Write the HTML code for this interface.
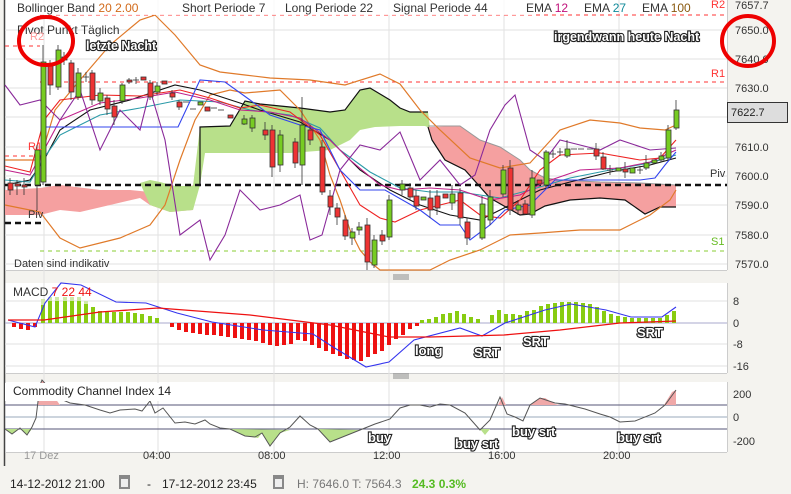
<!DOCTYPE html>
<html><head><meta charset="utf-8"><style>
html,body{margin:0;padding:0;background:#f4f3ef;}
svg{display:block;font-family:"Liberation Sans",sans-serif;}
.ol{font-family:"Liberation Sans",sans-serif;font-weight:bold;fill:#fff;stroke:#222;stroke-width:2.2px;paint-order:stroke;}
</style></head><body>
<svg width="791" height="494" viewBox="0 0 791 494" xmlns="http://www.w3.org/2000/svg">
<rect x="0" y="0" width="791" height="494" fill="#f4f3ef"/>
<rect x="5" y="0" width="722" height="270" fill="#fff"/>
<rect x="5" y="283" width="722" height="90" fill="#fff"/>
<rect x="5" y="382" width="722" height="70" fill="#fff"/>
<line x1="4.5" y1="0" x2="4.5" y2="466" stroke="#444" stroke-width="1.5"/>
<line x1="727.5" y1="0" x2="727.5" y2="270" stroke="#ccc"/>
<line x1="727.5" y1="283" x2="727.5" y2="373" stroke="#ccc"/>
<line x1="727.5" y1="382" x2="727.5" y2="452" stroke="#ccc"/>
<line x1="5" y1="270.5" x2="727" y2="270.5" stroke="#ccc"/>
<line x1="5" y1="373.5" x2="727" y2="373.5" stroke="#ccc"/>
<line x1="5" y1="452.5" x2="727" y2="452.5" stroke="#ccc"/>
<g stroke="#888"><line x1="393" y1="275" x2="409" y2="275"/><line x1="393" y1="277" x2="409" y2="277"/><line x1="393" y1="279" x2="409" y2="279"/>
<line x1="393" y1="374" x2="409" y2="374"/><line x1="393" y1="376" x2="409" y2="376"/><line x1="393" y1="378" x2="409" y2="378"/></g>
<g stroke="#e2e2e2">
<line x1="44" y1="0" x2="44" y2="452"/><line x1="158" y1="0" x2="158" y2="452"/><line x1="274" y1="0" x2="274" y2="452"/><line x1="389" y1="0" x2="389" y2="452"/><line x1="504" y1="0" x2="504" y2="452"/><line x1="619" y1="0" x2="619" y2="452"/>
<line x1="5" y1="30" x2="727" y2="30"/><line x1="5" y1="59" x2="727" y2="59"/><line x1="5" y1="88" x2="727" y2="88"/><line x1="5" y1="117" x2="727" y2="117"/><line x1="5" y1="147" x2="727" y2="147"/><line x1="5" y1="176" x2="727" y2="176"/><line x1="5" y1="205" x2="727" y2="205"/><line x1="5" y1="235" x2="727" y2="235"/><line x1="5" y1="264" x2="727" y2="264"/>
<line x1="5" y1="301" x2="727" y2="301"/><line x1="5" y1="344" x2="727" y2="344"/><line x1="5" y1="366" x2="727" y2="366"/>
</g>
<polygon points="5,190 40,188 60,185 100,190 130,190 150,192 160,185 175,186 190,186 195,185 193,210 170,212 150,205 140,198 110,205 80,212 60,210 40,215 5,215" fill="#f5a0a0"/>
<polygon points="140,183 150,180 160,182 175,186 193,186 200,127 230,126 245,101 260,104 300,108 330,112 345,110 360,90 370,88 390,100 400,108 410,112 428,112 430,128 425,126 400,126 375,127 360,130 350,140 330,150 290,153 230,153 205,153 200,185 193,210 170,212 150,205" fill="#b8e08a"/>
<polyline points="200,185 200,127 230,126 245,101 260,104 300,108 330,112 345,110 360,90 370,88 390,100 400,108 410,112 428,112" fill="none" stroke="#111" stroke-width="1.2"/>
<polygon points="428,127 460,126 480,140 500,147 520,160 530,170 545,178 560,180 600,182 640,183 676,185 676,207 660,207 645,214 625,200 600,198 570,200 545,206 530,214 520,215 490,198 465,170 445,160 432,140" fill="#f5a0a0"/>
<polyline points="428,127 432,140 445,160 465,170 490,198 520,215 530,214 545,206 570,200 600,198 625,200 645,214 660,207 676,207" fill="none" stroke="#111" stroke-width="1.2"/>
<polyline points="428,126 460,126 480,140 500,147 520,160 530,170 545,178 560,180 600,182 640,183 676,185" fill="none" stroke="#999" stroke-width="1"/>
<line x1="5" y1="185" x2="727" y2="185" stroke="#111" stroke-width="2.5" stroke-dasharray="6,4"/>
<line x1="5" y1="223" x2="42" y2="223" stroke="#111" stroke-width="2.5" stroke-dasharray="6,4"/>
<line x1="40" y1="82" x2="727" y2="82" stroke="#f33" stroke-dasharray="4,4"/>
<line x1="40" y1="15" x2="727" y2="15" stroke="#f33" stroke-dasharray="4,4"/>
<line x1="5" y1="46" x2="40" y2="46" stroke="#f33" stroke-dasharray="4,4"/>
<line x1="5" y1="156" x2="40" y2="156" stroke="#f33" stroke-dasharray="4,4"/>
<line x1="40" y1="251" x2="727" y2="251" stroke="#8c3" stroke-dasharray="4,4"/>
<polyline points="5,160 40,160 55,110 80,80 110,45 140,20 155,15 175,35 200,65 220,72 245,75 270,78 310,80 345,85 380,74 400,84 420,110 440,130 470,158 500,168 530,163 560,130 590,120 620,123 640,128 665,130 676,125" fill="none" stroke="#e07a2a" stroke-width="1.2"/>
<polyline points="5,205 40,212 60,238 80,248 120,238 150,225 165,205 180,160 195,120 210,95 230,90 245,93 280,90 300,110 320,140 330,175 340,200 350,230 360,250 370,262 380,270 430,270 450,260 480,250 510,235 540,233 580,230 620,230 650,215 670,200 676,190" fill="none" stroke="#e07a2a" stroke-width="1.2"/>
<polyline points="5,185 30,180 44,160 60,130 90,110 130,100 175,85 200,90 240,103 260,110 300,122 330,140 360,170 390,190 420,205 450,215 480,220 500,210 520,200 540,190 570,182 610,172 650,165 676,158" fill="none" stroke="#111" stroke-width="1.1"/>
<polyline points="5,180 30,182 44,158 60,135 100,115 140,108 180,100 220,102 250,110 290,115 320,128 340,150 370,172 400,188 430,192 460,192 500,198 530,190 570,178 610,170 650,163 676,155" fill="none" stroke="#2a9aa8" stroke-width="1.1"/>
<polyline points="5,170 30,175 44,150 60,120 100,103 140,98 175,92 210,100 240,110 270,112 300,118 330,140 350,160 380,185 400,190 430,188 460,190 490,200 520,195 545,182 580,170 620,168 650,162 676,150" fill="none" stroke="#c0208a" stroke-width="1.1"/>
<polyline points="5,166 30,172 44,120 60,100 100,95 140,96 180,90 210,98 240,108 260,105 290,112 320,135 340,170 360,205 380,218 395,222 420,210 440,205 460,200 480,215 500,218 520,200 540,170 560,155 600,153 640,160 660,158 676,140" fill="none" stroke="#ee2222" stroke-width="1.1"/>
<polyline points="44,127 178,127 200,80 225,82 250,100 270,115 300,125 320,130 340,170 360,190 385,190 420,210 440,225 460,225 470,240 490,225 505,210 530,205 555,180 600,180 640,180 655,178 665,165 676,152" fill="none" stroke="#3344ee" stroke-width="1.1"/>
<polyline points="5,85 20,105 40,100 60,120 80,90 100,150 120,110 140,130 150,90 165,140 180,235 200,220 210,260 225,235 240,190 260,210 280,205 300,195 310,240 322,235 340,170 360,145 380,150 400,132 420,180 440,160 460,185 475,175 490,130 505,105 515,95 530,150 545,160 560,140 580,145 600,150 620,140 650,150 676,148" fill="none" stroke="#8a2a9a" stroke-width="1.1"/>
<g stroke="#333" stroke-width="0.8">
<line x1="10" y1="178" x2="10" y2="195"/><rect x="8" y="183" width="5" height="7" fill="#e33"/>
<line x1="17" y1="180" x2="17" y2="195"/><rect x="15" y="184" width="5" height="2" fill="#e33"/>
<line x1="24" y1="178" x2="24" y2="195"/><rect x="22" y="185" width="5" height="2" fill="#e33"/>
<line x1="37" y1="145" x2="37" y2="210"/><rect x="35" y="150" width="5" height="35" fill="#7c2"/>
<line x1="43" y1="45" x2="43" y2="185"/><rect x="41" y="62" width="5" height="120" fill="#7c2"/>
<line x1="50" y1="60" x2="50" y2="95"/><rect x="48" y="65" width="5" height="20" fill="#e33"/>
<line x1="58" y1="45" x2="58" y2="90"/><rect x="56" y="50" width="5" height="37" fill="#7c2"/>
<line x1="64" y1="52" x2="64" y2="65"/><rect x="62" y="57" width="5" height="3" fill="#e33"/>
<line x1="71" y1="60" x2="71" y2="100"/><rect x="69" y="63" width="5" height="29" fill="#e33"/>
<line x1="78" y1="68" x2="78" y2="100"/><rect x="76" y="73" width="5" height="24" fill="#7c2"/>
<line x1="86" y1="72" x2="86" y2="82"/><line x1="83" y1="77" x2="89" y2="77"/>
<line x1="92" y1="70" x2="92" y2="105"/><rect x="90" y="73" width="5" height="27" fill="#e33"/>
<line x1="100" y1="88" x2="100" y2="105"/><rect x="98" y="93" width="5" height="8" fill="#7c2"/>
<line x1="107" y1="95" x2="107" y2="115"/><rect x="105" y="98" width="5" height="11" fill="#e33"/>
<line x1="114" y1="100" x2="114" y2="125"/><rect x="112" y="106" width="5" height="11" fill="#e33"/>
<line x1="122" y1="83" x2="122" y2="104"/><rect x="120" y="85" width="5" height="16" fill="#7c2"/>
<line x1="129" y1="78" x2="129" y2="84"/><rect x="127" y="80" width="5" height="2" fill="#e33"/>
<line x1="136" y1="77" x2="136" y2="84"/><line x1="133" y1="80" x2="139" y2="80"/>
<rect x="141" y="77" width="5" height="3" fill="#e33"/>
<line x1="150" y1="80" x2="150" y2="100"/><rect x="148" y="83" width="5" height="14" fill="#e33"/>
<line x1="157" y1="82" x2="157" y2="95"/><rect x="155" y="86" width="5" height="6" fill="#7c2"/>
<rect x="162" y="81" width="5" height="3" fill="#e33"/>
<line x1="172" y1="90" x2="172" y2="100"/><rect x="170" y="93" width="5" height="4" fill="#e33"/>
<line x1="179" y1="100" x2="179" y2="110"/><rect x="177" y="102" width="5" height="5" fill="#e33"/>
<line x1="183" y1="102" x2="189" y2="102"/><line x1="190" y1="109" x2="196" y2="109"/>
<rect x="198" y="102" width="5" height="3" fill="#7c2"/>
<rect x="205" y="107" width="5" height="4" fill="#e33"/>
<line x1="211" y1="108" x2="217" y2="108"/><line x1="218" y1="110" x2="224" y2="110"/>
<rect x="228" y="115" width="5" height="3" fill="#e33"/>
<line x1="244" y1="115" x2="244" y2="125"/><rect x="242" y="119" width="5" height="5" fill="#7c2"/>
<line x1="252" y1="115" x2="252" y2="132"/><rect x="250" y="118" width="5" height="10" fill="#7c2"/>
<line x1="265" y1="122" x2="265" y2="140"/><rect x="263" y="130" width="5" height="5" fill="#e33"/>
<line x1="272" y1="125" x2="272" y2="177"/><rect x="270" y="130" width="5" height="37" fill="#e33"/>
<line x1="280" y1="130" x2="280" y2="172"/><rect x="278" y="135" width="5" height="30" fill="#7c2"/>
<line x1="295" y1="138" x2="295" y2="168"/><rect x="293" y="142" width="5" height="21" fill="#e33"/>
<line x1="302" y1="97" x2="302" y2="185"/><rect x="300" y="125" width="5" height="40" fill="#7c2"/>
<line x1="310" y1="125" x2="310" y2="145"/><rect x="308" y="130" width="5" height="10" fill="#e33"/>
<line x1="322" y1="140" x2="322" y2="195"/><rect x="320" y="147" width="5" height="45" fill="#e33"/>
<line x1="330" y1="190" x2="330" y2="215"/><rect x="328" y="196" width="5" height="11" fill="#e33"/>
<line x1="337" y1="203" x2="337" y2="225"/><rect x="335" y="208" width="5" height="9" fill="#e33"/>
<line x1="345" y1="215" x2="345" y2="240"/><rect x="343" y="220" width="5" height="16" fill="#e33"/>
<line x1="352" y1="228" x2="352" y2="245"/><rect x="350" y="232" width="5" height="6" fill="#7c2"/>
<line x1="359" y1="222" x2="359" y2="235"/><rect x="357" y="227" width="5" height="3" fill="#7c2"/>
<line x1="367" y1="218" x2="367" y2="270"/><rect x="365" y="225" width="5" height="37" fill="#e33"/>
<line x1="374" y1="235" x2="374" y2="268"/><rect x="372" y="240" width="5" height="25" fill="#7c2"/>
<line x1="382" y1="230" x2="382" y2="245"/><rect x="380" y="235" width="5" height="6" fill="#e33"/>
<line x1="389" y1="195" x2="389" y2="240"/><rect x="387" y="200" width="5" height="37" fill="#7c2"/>
<line x1="402" y1="180" x2="402" y2="195"/><rect x="400" y="184" width="5" height="6" fill="#7c2"/>
<line x1="410" y1="183" x2="410" y2="200"/><rect x="408" y="188" width="5" height="9" fill="#e33"/>
<line x1="416" y1="190" x2="416" y2="210"/><rect x="414" y="196" width="5" height="10" fill="#e33"/>
<rect x="421" y="197" width="5" height="3" fill="#7c2"/>
<line x1="430" y1="190" x2="430" y2="218"/><rect x="428" y="198" width="5" height="12" fill="#e33"/>
<line x1="437" y1="190" x2="437" y2="215"/><rect x="435" y="196" width="5" height="12" fill="#e33"/>
<rect x="443" y="194" width="5" height="4" fill="#e33"/>
<line x1="452" y1="185" x2="452" y2="210"/><rect x="450" y="194" width="5" height="9" fill="#7c2"/>
<line x1="460" y1="188" x2="460" y2="225"/><rect x="458" y="193" width="5" height="25" fill="#e33"/>
<line x1="467" y1="218" x2="467" y2="245"/><rect x="465" y="222" width="5" height="16" fill="#e33"/>
<line x1="482" y1="196" x2="482" y2="240"/><rect x="480" y="204" width="5" height="34" fill="#7c2"/>
<line x1="490" y1="190" x2="490" y2="225"/><rect x="488" y="197" width="5" height="23" fill="#7c2"/>
<line x1="503" y1="165" x2="503" y2="197"/><rect x="501" y="170" width="5" height="24" fill="#7c2"/>
<line x1="510" y1="160" x2="510" y2="215"/><rect x="508" y="168" width="5" height="42" fill="#e33"/>
<line x1="518" y1="200" x2="518" y2="215"/><rect x="516" y="205" width="5" height="5" fill="#7c2"/>
<line x1="525" y1="200" x2="525" y2="215"/><rect x="523" y="204" width="5" height="10" fill="#e33"/>
<line x1="532" y1="170" x2="532" y2="218"/><rect x="530" y="178" width="5" height="37" fill="#7c2"/>
<rect x="537" y="180" width="5" height="4" fill="#e33"/>
<line x1="546" y1="150" x2="546" y2="188"/><rect x="544" y="152" width="5" height="33" fill="#7c2"/>
<line x1="553" y1="150" x2="553" y2="158"/><line x1="550" y1="154" x2="556" y2="154"/>
<line x1="560" y1="148" x2="560" y2="156"/><line x1="557" y1="152" x2="563" y2="152"/>
<line x1="567" y1="140" x2="567" y2="158"/><rect x="565" y="149" width="5" height="7" fill="#7c2"/>
<line x1="571" y1="149" x2="577" y2="149"/><line x1="578" y1="149" x2="584" y2="149"/><line x1="587" y1="149" x2="593" y2="149"/>
<line x1="596" y1="143" x2="596" y2="160"/><rect x="594" y="149" width="5" height="7" fill="#e33"/>
<line x1="603" y1="152" x2="603" y2="170"/><rect x="601" y="157" width="5" height="12" fill="#e33"/>
<line x1="610" y1="165" x2="610" y2="175"/><line x1="607" y1="170" x2="613" y2="170"/>
<rect x="616" y="168" width="5" height="3" fill="#7c2"/>
<line x1="625" y1="162" x2="625" y2="178"/><rect x="623" y="169" width="5" height="3" fill="#e33"/>
<rect x="630" y="168" width="5" height="5" fill="#7c2"/>
<line x1="640" y1="166" x2="640" y2="174"/><line x1="637" y1="170" x2="643" y2="170"/>
<line x1="646" y1="155" x2="646" y2="170"/><rect x="644" y="163" width="5" height="5" fill="#7c2"/>
<rect x="652" y="160" width="5" height="3" fill="#7c2"/>
<line x1="661" y1="152" x2="661" y2="162"/><rect x="659" y="156" width="5" height="4" fill="#7c2"/>
<line x1="668" y1="125" x2="668" y2="160"/><rect x="666" y="130" width="5" height="28" fill="#7c2"/>
<line x1="676" y1="100" x2="676" y2="130"/><rect x="674" y="110" width="5" height="18" fill="#7c2"/>
</g>
<rect x="13" y="0" width="520" height="15" fill="#fff" opacity="0.8"/>
<g font-size="12" fill="#333">
<text x="17" y="12">Bollinger Band <tspan fill="#d26a1a">20  2.00</tspan></text>
<text x="182" y="12">Short Periode  7</text>
<text x="285" y="12">Long Periode  22</text>
<text x="393" y="12">Signal Periode  44</text>
<text x="526" y="12">EMA <tspan fill="#c0107a">12</tspan></text>
<text x="584" y="12">EMA <tspan fill="#108a9a">27</tspan></text>
<text x="642" y="12">EMA <tspan fill="#8a5a10">100</tspan></text>
<text x="17" y="34">Pivot Punkt  Täglich</text>
<text x="14" y="267" font-size="11">Daten sind indikativ</text>
<text x="710" y="177" font-size="11">Piv</text>
<text x="28" y="218" font-size="11">Piv</text>
</g>
<g font-size="11" fill="#f33"><text x="711" y="8">R2</text><text x="711" y="77">R1</text><text x="28" y="150">R1</text><text x="30" y="40" fill="#f99">R2</text></g>
<text x="711" y="245" font-size="11" fill="#6b2">S1</text>
<text class="ol" x="86" y="50" font-size="12.5">letzte Nacht</text>
<text class="ol" x="554" y="41" font-size="12.5">irgendwann heute Nacht</text>
<g font-size="11" fill="#333">
<text x="735" y="9">7657.7</text><text x="735" y="34">7650.0</text><text x="735" y="63">7640.0</text><text x="735" y="92">7630.0</text><text x="735" y="151">7610.0</text><text x="735" y="180">7600.0</text><text x="735" y="209">7590.0</text><text x="735" y="239">7580.0</text><text x="735" y="268">7570.0</text>
</g>
<rect x="727.5" y="102.5" width="60" height="20" fill="#ddd" stroke="#333"/>
<text x="731" y="116" font-size="11" fill="#222">7622.7</text>
<ellipse cx="46" cy="41" rx="27" ry="24" fill="none" stroke="#e00" stroke-width="4"/>
<ellipse cx="748" cy="41" rx="26" ry="25" fill="none" stroke="#e00" stroke-width="4"/>
<line x1="5" y1="323" x2="727" y2="323" stroke="#aac"/>
<g fill="#8c1">
<rect x="41" y="299" width="4" height="24" fill="#cfe8a8"/><rect x="48" y="297" width="4" height="4" fill="#cfe8a8"/><rect x="55" y="297" width="4" height="4" fill="#cfe8a8"/><rect x="63" y="297" width="4" height="4" fill="#cfe8a8"/><rect x="70" y="297" width="4" height="4" fill="#cfe8a8"/><rect x="77" y="297" width="4" height="4" fill="#cfe8a8"/><rect x="84" y="301" width="4" height="3" fill="#cfe8a8"/>
<rect x="41" y="305" width="4" height="18"/><rect x="48" y="301" width="4" height="22"/><rect x="55" y="301" width="4" height="22"/><rect x="63" y="301" width="4" height="22"/><rect x="70" y="301" width="4" height="22"/><rect x="77" y="301" width="4" height="22"/><rect x="84" y="304" width="4" height="19"/><rect x="91" y="307" width="4" height="16"/><rect x="98" y="311" width="4" height="12"/><rect x="105" y="311" width="4" height="12"/><rect x="112" y="312" width="4" height="11"/><rect x="119" y="312" width="4" height="11"/><rect x="126" y="312" width="4" height="11"/><rect x="133" y="313" width="4" height="10"/><rect x="140" y="314" width="4" height="9"/><rect x="148" y="316" width="4" height="7"/><rect x="155" y="318" width="4" height="5"/>
<rect x="420" y="320" width="4" height="3"/><rect x="427" y="319" width="4" height="4"/><rect x="434" y="317" width="4" height="6"/><rect x="441" y="314" width="4" height="9"/><rect x="448" y="313" width="4" height="10"/><rect x="455" y="311" width="4" height="12"/><rect x="462" y="314" width="4" height="9"/><rect x="469" y="317" width="4" height="6"/><rect x="476" y="319" width="4" height="4"/><rect x="490" y="315" width="4" height="8"/><rect x="497" y="310" width="4" height="13"/><rect x="504" y="314" width="4" height="9"/><rect x="511" y="314" width="4" height="9"/><rect x="518" y="315" width="4" height="8"/><rect x="525" y="311" width="4" height="12"/><rect x="532" y="310" width="4" height="13"/><rect x="539" y="306" width="4" height="17"/><rect x="546" y="304" width="4" height="19"/><rect x="553" y="303" width="4" height="20"/><rect x="560" y="302" width="4" height="21"/><rect x="567" y="302" width="4" height="21"/><rect x="574" y="302" width="4" height="21"/><rect x="581" y="303" width="4" height="20"/><rect x="588" y="304" width="4" height="19"/><rect x="595" y="307" width="4" height="16"/><rect x="602" y="311" width="4" height="12"/><rect x="609" y="314" width="4" height="9"/><rect x="616" y="316" width="4" height="7"/><rect x="623" y="317" width="4" height="6"/><rect x="630" y="318" width="4" height="5"/><rect x="637" y="318" width="4" height="5"/><rect x="644" y="318" width="4" height="5"/><rect x="651" y="318" width="4" height="5"/><rect x="658" y="318" width="4" height="5"/><rect x="665" y="315" width="4" height="8"/><rect x="672" y="311" width="4" height="12"/>
</g>
<g fill="#e11">
<rect x="12" y="323" width="4" height="4"/><rect x="19" y="323" width="4" height="6"/><rect x="26" y="323" width="4" height="7"/><rect x="33" y="323" width="4" height="4"/>
<rect x="170" y="323" width="4" height="4"/><rect x="177" y="323" width="4" height="7"/><rect x="184" y="323" width="4" height="9"/><rect x="191" y="323" width="4" height="10"/><rect x="198" y="323" width="4" height="11"/><rect x="205" y="323" width="4" height="12"/><rect x="212" y="323" width="4" height="12"/><rect x="219" y="323" width="4" height="13"/><rect x="226" y="323" width="4" height="14"/><rect x="233" y="323" width="4" height="15"/><rect x="240" y="323" width="4" height="16"/><rect x="247" y="323" width="4" height="17"/><rect x="254" y="323" width="4" height="18"/><rect x="261" y="323" width="4" height="20"/><rect x="268" y="323" width="4" height="22"/><rect x="275" y="323" width="4" height="23"/><rect x="282" y="323" width="4" height="22"/><rect x="289" y="323" width="4" height="21"/><rect x="296" y="323" width="4" height="17"/><rect x="303" y="323" width="4" height="18"/><rect x="310" y="323" width="4" height="22"/><rect x="317" y="323" width="4" height="25"/><rect x="324" y="323" width="4" height="28"/><rect x="331" y="323" width="4" height="31"/><rect x="338" y="323" width="4" height="33"/><rect x="345" y="323" width="4" height="36"/><rect x="352" y="323" width="4" height="37"/><rect x="359" y="323" width="4" height="38"/><rect x="366" y="323" width="4" height="34"/><rect x="373" y="323" width="4" height="31"/><rect x="380" y="323" width="4" height="28"/><rect x="387" y="323" width="4" height="22"/><rect x="394" y="323" width="4" height="16"/><rect x="401" y="323" width="4" height="12"/><rect x="408" y="323" width="4" height="6"/><rect x="415" y="323" width="4" height="3"/>
</g>
<polyline points="8,320 35,327 45,303 61,283 81,285 116,302 146,303 177,313 212,322 263,330 313,334 333,347 366,367 389,362 414,340 460,328 482,336 505,323 545,310 571,304 606,310 631,317 662,317 676,307" fill="none" stroke="#33e" stroke-width="1.1"/>
<polyline points="8,320 44,320 100,312 158,308 250,315 330,325 389,337 430,337 504,335 560,330 620,323 676,321" fill="none" stroke="#e11" stroke-width="1.3"/>
<text x="13" y="296" font-size="12" fill="#333">MACD <tspan fill="#e11">7  22  44</tspan></text>
<g font-size="11" fill="#333"><text x="733" y="305">8</text><text x="733" y="327">0</text><text x="733" y="348">-8</text><text x="733" y="370">-16</text></g>
<g class="ol" font-size="13"><text x="415" y="355">long</text><text x="474" y="357">SRT</text><text x="523" y="346">SRT</text><text x="637" y="337">SRT</text></g>
<line x1="5" y1="405" x2="727" y2="405" stroke="#557"/>
<line x1="5" y1="417" x2="727" y2="417" stroke="#9ab"/>
<line x1="5" y1="429" x2="727" y2="429" stroke="#557"/>
<polygon points="38,405 42,380 60,405" fill="#f0a8a8"/>
<polygon points="498,405 502,397 506,405" fill="#f0a8a8"/>
<polygon points="530,405 540,398 545,398 555,404 560,405" fill="#f0a8a8"/>
<polygon points="664,405 672,392 676,390 676,405" fill="#f0a8a8"/>
<polygon points="5,429 12,434 20,428 27,435 32,429" fill="#b8e08a"/>
<polygon points="230,429 245,436 258,438 262,433 270,446 280,433 290,430" fill="#b8e08a"/>
<polygon points="318,429 330,442 345,436 360,430" fill="#b8e08a"/>
<polygon points="480,429 485,435 490,429" fill="#b8e08a"/>
<polyline points="5,429 12,434 20,428 27,435 32,427 36,418 40,385 42,380 58,398 70,403 85,405 100,410 110,413 120,410 135,409 142,411 150,401 155,413 163,408 175,423 185,422 195,424 205,420 210,424 220,428 230,429 245,436 255,437 262,433 270,446 280,433 290,427 300,416 310,425 318,429 330,442 345,436 360,430 375,424 390,419 400,408 410,405 420,405 430,407 440,404 450,405 465,413 480,430 490,420 500,397 507,414 515,417 523,421 530,405 540,398 555,403 565,404 585,409 600,414 610,417 620,422 635,421 655,413 665,405 676,390" fill="none" stroke="#555" stroke-width="1"/>
<rect x="5" y="383" width="180" height="18" fill="#fff"/>
<text x="13" y="395" font-size="12" fill="#222">Commodity Channel Index  14</text>
<g font-size="11" fill="#333"><text x="733" y="398">200</text><text x="733" y="421">0</text><text x="733" y="445">-200</text></g>
<g class="ol" font-size="13"><text x="368" y="442">buy</text><text x="455" y="448">buy srt</text><text x="512" y="436">buy srt</text><text x="617" y="442">buy srt</text></g>
<g font-size="11" fill="#333"><text x="24" y="459" fill="#999">17 Dez</text><text x="143" y="459">04:00</text><text x="258" y="459">08:00</text><text x="373" y="459">12:00</text><text x="488" y="459">16:00</text><text x="603" y="459">20:00</text></g>
<g font-size="12" fill="#222">
<text x="10" y="488">14-12-2012 21:00</text>
<text x="147" y="488">-</text>
<text x="162" y="488">17-12-2012 23:45</text>
<text x="297" y="488" fill="#777">H: 7646.0  T: 7564.3</text>
<text x="412" y="488" fill="#5b2" font-weight="bold">24.3  0.3%</text>
</g>
<g fill="#888"><rect x="119" y="475" width="11" height="14"/><rect x="273" y="475" width="11" height="14"/></g>
<g fill="#eee"><rect x="121" y="479" width="7" height="8"/><rect x="275" y="479" width="7" height="8"/></g>
</svg>
</body></html>
